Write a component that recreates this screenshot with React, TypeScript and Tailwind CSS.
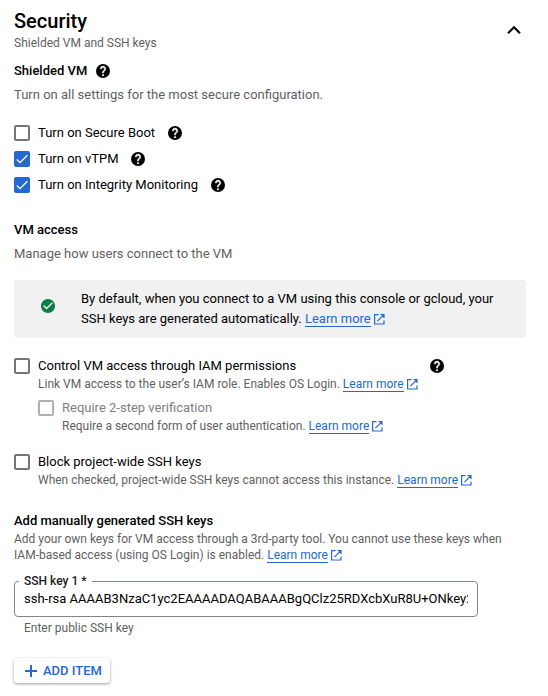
import type { ReactNode } from 'react';

function HelpIcon() {
  return (
    <svg className="size-[14px] shrink-0" viewBox="2 2 20 20">
      <circle cx="12" cy="12" r="10" fill="#000" />
      <path
        d="M11 17h2v2h-2zM15.070 11.250l-.9.920C13.450 12.900 13 13.500 13 15h-2v-.5c0-1.100.45-2.100 1.170-2.830l1.240-1.260c.37-.36.59-.86.59-1.410 0-1.100-.9-2-2-2s-2 .9-2 2H8c0-2.210 1.790-4 4-4s4 1.790 4 4c0 .88-.36 1.680-.93 2.250z"
        fill="#fff"
        stroke="#fff"
        strokeWidth="0.600"
      />
    </svg>
  );
}

function LearnMore() {
  return (
    <a className="whitespace-nowrap text-[#2468d2]">
      <span className="inline-block h-4 border-b border-[#2468d2] leading-4">Learn more</span>
      <svg className="ml-[3px] inline-block size-[11px] align-[-2px]" viewBox="0 0 11 11" fill="none" stroke="#2468d2" strokeWidth="1.200">
        <path d="M4.500 .6H.6v9.400h9.400V6.500M6.500 .6h3.500v3.500M10 .6 3.400 7.200" />
      </svg>
    </a>
  );
}

function Checkbox({ checked = false, disabled = false }: { checked?: boolean; disabled?: boolean }) {
  if (checked) {
    return (
      <span className="size-4 shrink-0 rounded-[2px] bg-[#2468d2]">
        <svg className="size-4 p-[2px]" viewBox="0 0 24 24" fill="none" stroke="#fff" strokeWidth="2.700">
          <path d="M1.730 12.910 8.100 19.280 22.790 4.590" />
        </svg>
      </span>
    );
  }
  return (
    <span
      className={`size-4 shrink-0 rounded-[2px] border-2 ${disabled ? 'border-[#b0b0b0]' : 'border-[#757575]'}`}
    />
  );
}

function Setting({ label, checked }: { label: string; checked?: boolean }) {
  return (
    <div className="flex h-[26px] items-center">
      <Checkbox checked={checked} />
      <span className="ml-2 mr-[12.600px]">{label}</span>
      <HelpIcon />
    </div>
  );
}

function Option({ label, disabled, help, children }: { label: string; disabled?: boolean; help?: boolean; children: ReactNode }) {
  return (
    <div>
      <div className="flex h-5 items-center">
        <Checkbox disabled={disabled} />
        <span className={`ml-2 ${disabled ? 'text-[#808080]' : ''}`}>{label}</span>
        {help && <span className="ml-[134px]"><HelpIcon /></span>}
      </div>
      <p className="ml-6 h-4 whitespace-nowrap text-xs leading-4 text-[#5f5f5f]">{children} <LearnMore /></p>
    </div>
  );
}

export default function App() {
  return (
    <main className="h-[696px] w-[548px] overflow-hidden bg-white pl-[14px] pt-[9px] font-['Roboto',sans-serif] text-[13px] leading-5 text-black">
      <header className="flex w-[512px] items-center justify-between">
        <div>
          <h1 className="text-xl font-medium leading-6">Security</h1>
          <p className="mt-[2px] text-xs leading-4 text-[#5f5f5f]">Shielded VM and SSH keys</p>
        </div>
        <svg className="mr-[5px] h-[10px] w-[14px]" viewBox="0 0 14 10" fill="none" stroke="#000" strokeWidth="2.100">
          <path d="M1 8.300 7 2.300l6 6" />
        </svg>
      </header>

      <h2 className="mt-[10px] flex h-5 items-center gap-[9px] font-medium">Shielded VM <HelpIcon /></h2>
      <p className="mt-1 text-[#5f5f5f]">Turn on all settings for the most secure configuration.</p>
      <div className="mt-[15px]">
        <Setting label="Turn on Secure Boot" />
        <Setting label="Turn on vTPM" checked />
        <Setting label="Turn on Integrity Monitoring" checked />
      </div>

      <h2 className="mt-[22px] font-medium">VM access</h2>
      <p className="mt-1 text-[#5f5f5f]">Manage how users connect to the VM</p>
      <div className="mt-4 flex h-[58px] w-[512px] rounded bg-[#f1f1f1] pl-[27px] pt-[9px]">
        <svg className="mt-[10px] size-[14px] shrink-0" viewBox="2 2 20 20" fill="#0a8043">
          <path d="M12 2C6.480 2 2 6.480 2 12s4.480 10 10 10 10-4.480 10-10S17.520 2 12 2zm-2 15l-5-5 1.410-1.410L10 14.170l7.590-7.590L19 8l-9 9z" />
        </svg>
        <p className="ml-[26px] w-[430px]">
          By default, when you connect to a VM using this console or gcloud, your<br />
          SSH keys are generated automatically. <LearnMore />
        </p>
      </div>

      <div className="mt-[18px]">
        <Option label="Control VM access through IAM permissions" help>
          Link VM access to the user’s IAM role. Enables OS Login.
        </Option>
      </div>
      <div className="ml-6 mt-[6px]">
        <Option label="Require 2-step verification" disabled>
          Require a second form of user authentication.
        </Option>
      </div>
      <div className="mt-[18px]">
        <Option label="Block project-wide SSH keys">
          When checked, project-wide SSH keys cannot access this instance.
        </Option>
      </div>

      <h2 className="mt-[23px] font-medium">Add manually generated SSH keys</h2>
      <p className="h-8 whitespace-nowrap text-xs leading-4 text-[#5f5f5f]">
        Add your own keys for VM access through a 3rd-party tool. You cannot use these keys when<br />
        IAM-based access (using OS Login) is enabled. <LearnMore />
      </p>
      <div className="relative mt-[18px] h-9 w-[464px] rounded border border-[#80868b] px-[9px] pt-[7px]">
        <label className="absolute -top-[9px] left-1 bg-white px-[5px] text-xs font-medium leading-4 text-[#202124]">SSH key 1 *</label>
        <div className="overflow-hidden whitespace-nowrap">ssh-rsa AAAAB3NzaC1yc2EAAAADAQABAAABgQClz25RDXcbXuR8U+ONkey2</div>
      </div>
      <p className="ml-[10px] mt-[3px] text-xs leading-4 text-[#5f5f5f]">Enter public SSH key</p>
      <button className="mt-[22px] flex h-[25px] w-24 items-center rounded-[3px] bg-white pl-[11px] font-medium text-[#2468d2] shadow-[0_1px_3px_rgba(0,0,0,0.4)]">
        <svg className="mr-[6px] size-3" viewBox="0 0 12 12" fill="#2468d2">
          <path d="M5 0h2v5h5v2H7v5H5V7H0V5h5z" />
        </svg>
        ADD ITEM
      </button>
    </main>
  );
}
